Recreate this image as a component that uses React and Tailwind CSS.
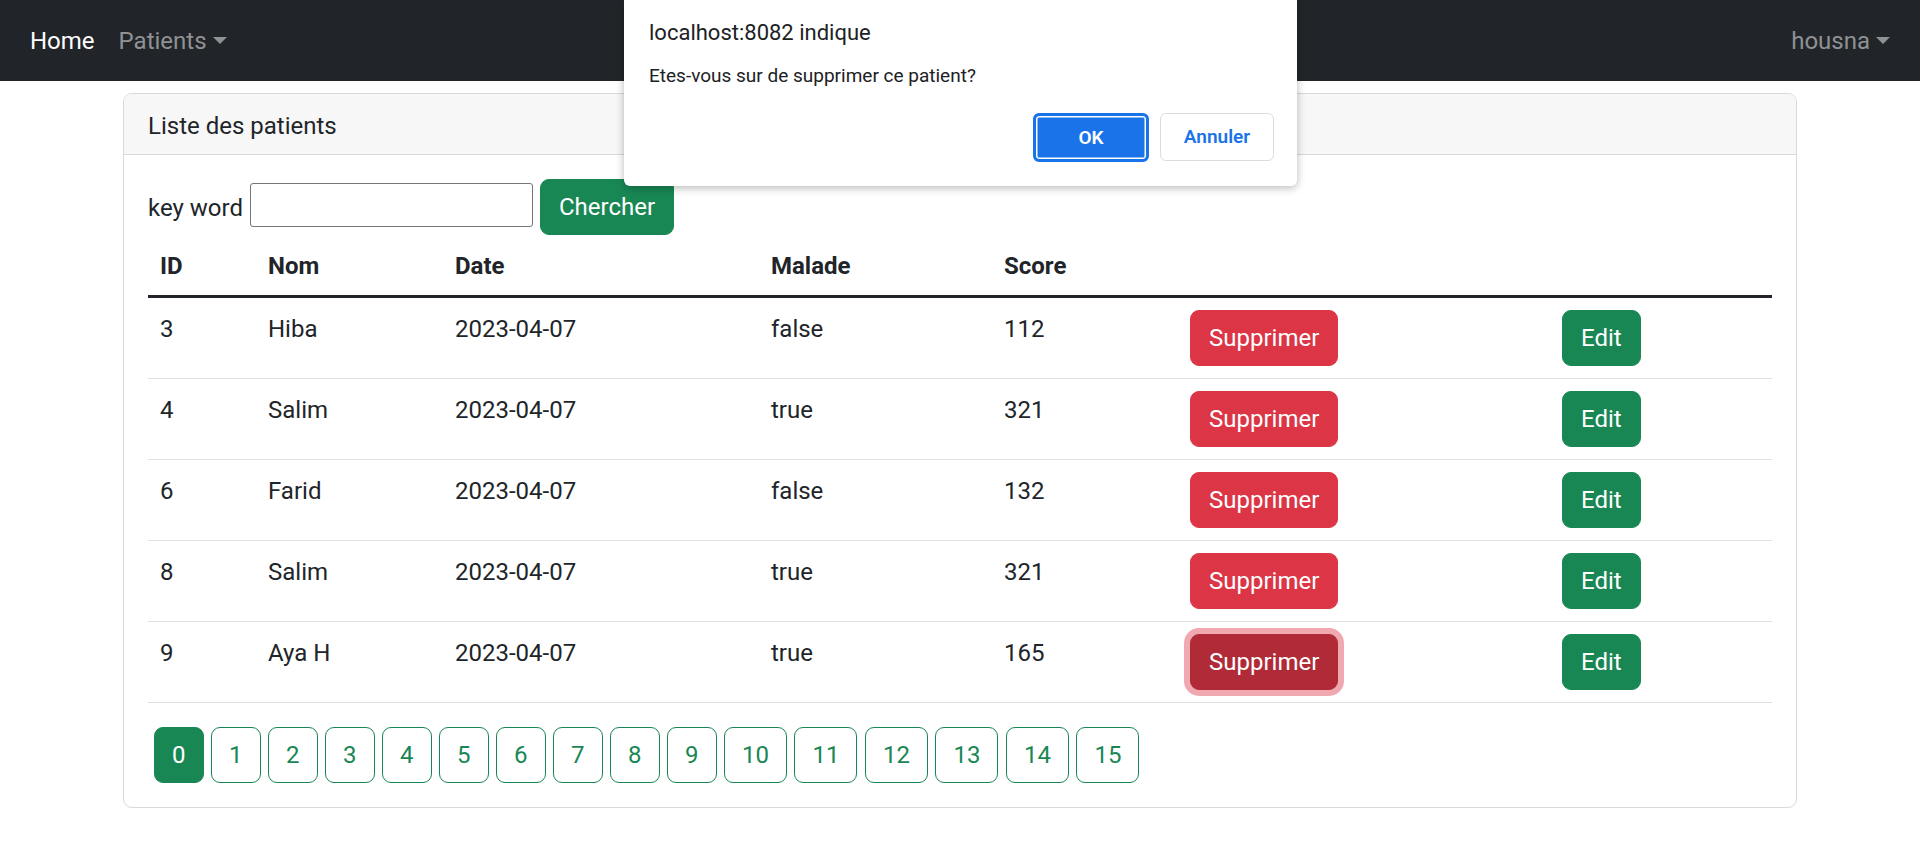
import React from 'react';

const patients = [
  { id: 3, nom: 'Hiba', date: '2023-04-07', malade: 'false', score: 112 },
  { id: 4, nom: 'Salim', date: '2023-04-07', malade: 'true', score: 321 },
  { id: 6, nom: 'Farid', date: '2023-04-07', malade: 'false', score: 132 },
  { id: 8, nom: 'Salim', date: '2023-04-07', malade: 'true', score: 321 },
  { id: 9, nom: 'Aya H', date: '2023-04-07', malade: 'true', score: 165 },
];

const pages = Array.from({ length: 16 }, (_, i) => i);

const Caret = () => (
  <span className="ml-[6px] inline-block w-0 h-0 border-t-[7px] border-t-current border-x-[7px] border-x-transparent align-middle" />
);

const Navbar = () => (
  <nav className="h-[81px] bg-[#212529] flex items-center justify-between px-[18px]">
    <div className="flex items-center">
      <a className="px-[12px] text-white">Home</a>
      <a className="px-[12px] text-[#8f9193] flex items-center">
        Patients
        <Caret />
      </a>
    </div>
    <a className="px-[12px] text-[#8f9193] flex items-center">
      housna
      <Caret />
    </a>
  </nav>
);

// browser confirm() box shown on top of the page
const ConfirmDialog = () => (
  <div className="absolute top-0 left-[624px] w-[673px] h-[186px] bg-white rounded-b-[6px] shadow-[0_2px_8px_rgba(0,0,0,0.28)] px-[25px] pt-[18px] flex flex-col">
    <div className="text-[22px] leading-[30px] text-[#202124]">localhost:8082 indique</div>
    <div className="mt-[14px] text-[19px] leading-[28px] text-[#202124]">Etes-vous sur de supprimer ce patient?</div>
    <div className="mt-auto mb-[24px] flex justify-end gap-[11px]">
      <button className="w-[116px] h-[49px] rounded-[6px] bg-[#1a73e8] border-[3px] border-[#1a73e8] shadow-[inset_0_0_0_1.5px_white] text-white text-[19px] font-semibold">
        OK
      </button>
      <button className="w-[114px] h-[48px] rounded-[6px] bg-white border border-[#dadce0] text-[#1a73e8] text-[19px] font-semibold -mr-[2px]">
        Annuler
      </button>
    </div>
  </div>
);

const App = () => {
  return (
    <div className="relative min-h-screen bg-white text-[#212529] text-[24px] leading-[36px] font-['Segoe_UI',Roboto,'Liberation_Sans',sans-serif]">
      <Navbar />

      <div className="w-[1674px] mx-auto mt-[12px] border border-[#d9d9d9] rounded-[9px] overflow-hidden">
        <div className="bg-[#f7f7f7] border-b border-[#d9d9d9] px-[24px] pt-[14px] pb-[10px]">Liste des patients</div>

        <div className="p-[24px]">
          {/* search form */}
          <form className="flex items-center gap-[7px]">
            <label className="pt-[1px]">key word</label>
            <input type="text" className="w-[283px] h-[44px] border border-[#767676] rounded-[3px] px-[3px] -mt-[4px]" />
            <button type="button" className="bg-[#198754] text-white border border-[#198754] rounded-[9px] px-[18px] py-[9px] leading-[36px]">
              Chercher
            </button>
          </form>

          <table className="w-full table-fixed border-collapse mb-[24px]">
            <thead>
              <tr className="border-b-[3px] border-[#212529] text-left">
                <th className="w-[108px] px-[12px] pt-[13px] pb-[11px] font-bold">ID</th>
                <th className="w-[187px] px-[12px] pt-[13px] pb-[11px] font-bold">Nom</th>
                <th className="w-[316px] px-[12px] pt-[13px] pb-[11px] font-bold">Date</th>
                <th className="w-[233px] px-[12px] pt-[13px] pb-[11px] font-bold">Malade</th>
                <th className="w-[186px] px-[12px] pt-[13px] pb-[11px] font-bold">Score</th>
                <th className="w-[372px] p-[12px]"></th>
                <th className="w-[222px] p-[12px]"></th>
              </tr>
            </thead>
            <tbody>
              {patients.map((p, idx) => (
                <tr key={p.id} className="border-b border-[#dee2e6]">
                  <td className="px-[12px] pt-[13px] pb-[11px] align-top">{p.id}</td>
                  <td className="px-[12px] pt-[13px] pb-[11px] align-top">{p.nom}</td>
                  <td className="px-[12px] pt-[13px] pb-[11px] align-top">{p.date}</td>
                  <td className="px-[12px] pt-[13px] pb-[11px] align-top">{p.malade}</td>
                  <td className="px-[12px] pt-[13px] pb-[11px] align-top">{p.score}</td>
                  <td className="p-[12px] align-top">
                    <button
                      className={
                        idx === patients.length - 1
                          ? 'bg-[#b02a37] border border-[#b02a37] text-white rounded-[9px] px-[18px] py-[9px] leading-[36px] shadow-[0_0_0_6px_rgba(225,83,97,0.5)]'
                          : 'bg-[#dc3545] border border-[#dc3545] text-white rounded-[9px] px-[18px] py-[9px] leading-[36px]'
                      }
                    >
                      Supprimer
                    </button>
                  </td>
                  <td className="p-[12px] align-top">
                    <button className="bg-[#198754] border border-[#198754] text-white rounded-[9px] px-[18px] py-[9px] leading-[36px]">
                      Edit
                    </button>
                  </td>
                </tr>
              ))}
            </tbody>
          </table>

          {/* pagination */}
          <ul className="flex gap-[7.5px] pl-[6px]">
            {pages.map((n) => (
              <li key={n}>
                <a
                  className={
                    n === 0
                      ? 'block bg-[#198754] border border-[#198754] text-white rounded-[9px] px-[17px] py-[9px] leading-[36px]'
                      : 'block bg-white border border-[#198754] text-[#198754] rounded-[9px] px-[17px] py-[9px] leading-[36px]'
                  }
                >
                  {n}
                </a>
              </li>
            ))}
          </ul>
        </div>
      </div>

      <ConfirmDialog />
    </div>
  );
};

export default App;
